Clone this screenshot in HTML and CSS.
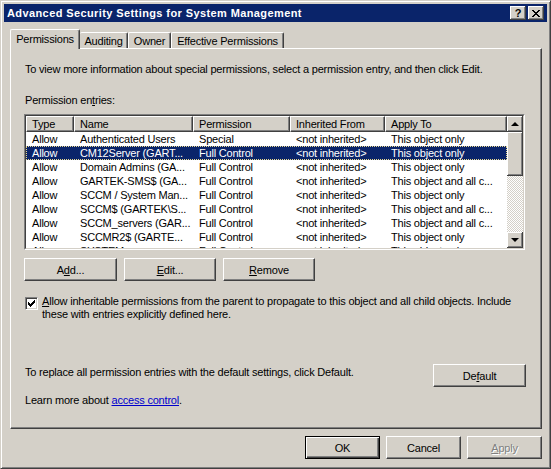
FILE: index.html
```html
<!DOCTYPE html>
<html lang="en">
<head>
  <meta charset="UTF-8">
  <title>Advanced Security Settings for System Management</title>
  <link rel="stylesheet" href="styles.css">
</head>
<body>
  <div class="window">
    <div class="titlebar">
      <span class="title">Advanced Security Settings for System Management</span>
      <div class="caption-btns">
        <span class="cap-btn help">?</span>
        <span class="cap-btn close">
          <svg width="8" height="7" viewBox="0 0 8 7"><path d="M0 0h2v1H0zM1 1h2v1H1zM2 2h4v1H2zM3 3h2v1H3zM2 4h4v1H2zM1 5h2v1H1zM0 6h2v1H0zM6 0h2v1H6zM5 1h2v1H5zM5 5h2v1H5zM6 6h2v1H6z" fill="#000"/></svg>
        </span>
      </div>
    </div>

    <div class="dialog-body">
      <div class="tabs">
        <div class="tab active tab-perm">Permissions</div>
        <div class="tab tab-audit">Auditing</div>
        <div class="tab tab-owner">Owner</div>
        <div class="tab tab-eff">Effective Permissions</div>
      </div>

      <div class="panel">
        <p class="intro">To view more information about special permissions, select a permission entry, and then click Edit.</p>
        <p class="list-label">Permission en<u>t</u>ries:</p>

        <div class="listbox">
          <div class="listbox-inner">
            <div class="rows">
              <div class="row head">
                <div>Type</div><div>Name</div><div>Permission</div><div>Inherited From</div><div>Apply To</div>
              </div>
              <div class="row"><div>Allow</div><div>Authenticated Users</div><div>Special</div><div>&lt;not inherited&gt;</div><div>This object only</div></div>
              <div class="row selected"><div>Allow</div><div>CM12Server (GART...</div><div>Full Control</div><div>&lt;not inherited&gt;</div><div>This object only</div></div>
              <div class="row"><div>Allow</div><div>Domain Admins (GA...</div><div>Full Control</div><div>&lt;not inherited&gt;</div><div>This object only</div></div>
              <div class="row"><div>Allow</div><div>GARTEK-SMS$ (GA...</div><div>Full Control</div><div>&lt;not inherited&gt;</div><div>This object and all c...</div></div>
              <div class="row"><div>Allow</div><div>SCCM / System Man...</div><div>Full Control</div><div>&lt;not inherited&gt;</div><div>This object only</div></div>
              <div class="row"><div>Allow</div><div>SCCM$ (GARTEK\S...</div><div>Full Control</div><div>&lt;not inherited&gt;</div><div>This object and all c...</div></div>
              <div class="row"><div>Allow</div><div>SCCM_servers (GAR...</div><div>Full Control</div><div>&lt;not inherited&gt;</div><div>This object and all c...</div></div>
              <div class="row"><div>Allow</div><div>SCCMR2$ (GARTE...</div><div>Full Control</div><div>&lt;not inherited&gt;</div><div>This object only</div></div>
              <div class="row"><div>Allow</div><div>SYSTEM</div><div>Full Control</div><div>&lt;not inherited&gt;</div><div>This object only</div></div>
            </div>
            <div class="scrollbar">
              <div class="sb-btn"><span class="arrow up"></span></div>
              <div class="sb-thumb"></div>
              <div class="sb-track"></div>
              <div class="sb-btn"><span class="arrow down"></span></div>
            </div>
          </div>
        </div>

        <div class="list-buttons">
          <button class="btn">A<u>d</u>d...</button>
          <button class="btn"><u>E</u>dit...</button>
          <button class="btn"><u>R</u>emove</button>
        </div>

        <div class="inherit">
          <span class="checkbox">
            <svg width="7" height="7" viewBox="0 0 7 7"><path d="M6 0h1v1H6zM5 1h2v1H5zM0 2h1v1H0zM4 2h3v1H4zM0 3h2v1H0zM3 3h3v1H3zM0 4h5v1H0zM1 5h3v1H1zM2 6h1v1H2z" fill="#000"/></svg>
          </span>
          <span class="inherit-text"><u>A</u>llow inheritable permissions from the parent to propagate to this object and all child objects. Include<br>these with entries explicitly defined here.</span>
        </div>

        <div class="default-row">
          <span class="default-text">To replace all permission entries with the default settings, click Default.</span>
          <button class="btn btn-default">De<u>f</u>ault</button>
        </div>

        <p class="learn">Learn more about <a href="#">access control</a>.</p>
      </div>

      <div class="footer">
        <button class="btn btn-ok">OK</button>
        <button class="btn">Cancel</button>
        <button class="btn" disabled><u>A</u>pply</button>
      </div>
    </div>
  </div>
</body>
</html>
```

FILE: styles.css
```css
/* Classic dialog look */
body {
  margin: 0;
  font-family: 'Liberation Sans', Arial, sans-serif;
  font-size: 11px;
  letter-spacing: -0.2px;
  color: #000;
  background-color: #d4d0c8;
}
p {
  margin: 0;
}
.window {
  width: 551px;
  height: 469px;
  box-sizing: border-box;
  background-color: #d4d0c8;
  border: 1px solid;
  border-color: #d4d0c8 #404040 #404040 #d4d0c8;
  box-shadow: inset 1px 1px #fff, inset -1px -1px #808080;
  padding: 3px;
  display: flex;
  flex-direction: column;
}

/* Title bar */
.titlebar {
  height: 18px;
  background-color: #0a246a;
  display: flex;
  align-items: center;
  justify-content: space-between;
  padding: 0 3px 0 3px;
}
.title {
  color: #fff;
  font-weight: bold;
  font-size: 11px;
  letter-spacing: 0.4px;
}
.caption-btns {
  display: flex;
  gap: 2px;
}
.cap-btn {
  width: 16px;
  height: 14px;
  box-sizing: border-box;
  background-color: #d4d0c8;
  box-shadow: inset -1px -1px #404040, inset 1px 1px #fff, inset -2px -2px #808080;
  display: flex;
  align-items: center;
  justify-content: center;
  font-weight: bold;
  font-size: 11px;
  line-height: 14px;
}

/* Tabs */
.dialog-body {
  padding: 7px 5px 0 6px;
}
.tabs {
  display: flex;
  align-items: flex-end;
  height: 20px;
  margin-bottom: -1px;
  position: relative;
  z-index: 1;
}
.tab {
  height: 16px;
  margin-bottom: 1px;
  box-sizing: border-box;
  padding-top: 2px;
  text-align: center;
  background-color: #d4d0c8;
  border-top: 1px solid #fff;
  border-left: 1px solid #fff;
  border-right: 1px solid #404040;
  box-shadow: inset -1px 0 #808080;
  border-radius: 2px 2px 0 0;
}
.tab.active {
  height: 20px;
  margin-bottom: 0;
  padding-top: 3px;
}
.tab-perm { width: 70px; }
.tab-audit { width: 48px; border-left: none; }
.tab-owner { width: 43px; }
.tab-eff { width: 113px; }

.panel {
  height: 381px;
  box-sizing: border-box;
  border: 1px solid;
  border-color: #fff #404040 #404040 #fff;
  box-shadow: inset -1px -1px #808080;
  padding: 0 15px 0 14px;
}
.intro {
  margin-top: 14px;
  line-height: 13px;
}
.list-label {
  margin-top: 18px;
  line-height: 13px;
}

/* List view */
.listbox {
  margin: 7px 0 0 -1px;
  width: 501px;
  height: 136px;
  box-sizing: border-box;
  border: 1px solid;
  border-color: #808080 #fff #fff #808080;
}
.listbox-inner {
  height: 100%;
  box-sizing: border-box;
  border: 1px solid;
  border-color: #404040 #d4d0c8 #d4d0c8 #404040;
  background-color: #fff;
  display: flex;
}
.rows {
  flex: 1;
  overflow: hidden;
}
.row {
  display: grid;
  grid-template-columns: 48px 119px 97px 95px 122px;
  height: 14px;
  line-height: 14px;
}
.row div {
  padding-left: 6px;
  white-space: nowrap;
  overflow: hidden;
}
.row.head {
  height: 16px;
  line-height: 15px;
}
.row.head div {
  background-color: #d4d0c8;
  box-sizing: border-box;
  border-top: 1px solid #fff;
  border-left: 1px solid #fff;
  border-right: 1px solid #404040;
  border-bottom: 1px solid #404040;
  box-shadow: inset -1px -1px #808080;
  padding-left: 5px;
}
.row.selected {
  background-color: #0a246a;
  color: #fff;
  outline: 1px dotted #e8d890;
  outline-offset: -1px;
}

.scrollbar {
  width: 16px;
  display: flex;
  flex-direction: column;
}
.sb-btn,
.sb-thumb {
  background-color: #d4d0c8;
  box-shadow: inset -1px -1px #404040, inset 1px 1px #fff, inset -2px -2px #808080;
}
.sb-btn {
  height: 16px;
  display: flex;
  align-items: center;
  justify-content: center;
}
.sb-thumb {
  height: 44px;
}
.sb-track {
  flex: 1;
  background: repeating-conic-gradient(#d4d0c8 0 25%, #fff 0 50%) 0 0 / 2px 2px;
}
.arrow {
  width: 0;
  height: 0;
  border-left: 4px solid transparent;
  border-right: 4px solid transparent;
}
.arrow.up {
  border-bottom: 4px solid #000;
}
.arrow.down {
  border-top: 4px solid #000;
}

/* Buttons */
.btn {
  font-family: inherit;
  font-size: 11px;
  letter-spacing: inherit;
  color: #000;
  height: 23px;
  padding: 0;
  background-color: #d4d0c8;
  border: 1px solid;
  border-color: #fff #404040 #404040 #fff;
  box-shadow: inset -1px -1px #808080;
}
.btn:disabled {
  color: #808080;
  text-shadow: 1px 1px #fff;
}
.btn-ok {
  border: 1px solid #000;
  box-shadow: inset 1px 1px #fff, inset -1px -1px #404040, inset -2px -2px #808080;
}
.list-buttons {
  margin: 8px 0 0 -1px;
  display: flex;
  gap: 7px;
}
.list-buttons .btn {
  width: 92px;
}
.list-buttons .btn:first-child {
  width: 93px;
}

/* Inherit checkbox */
.inherit {
  margin-top: 14px;
  display: flex;
  gap: 4px;
  line-height: 13px;
}
.checkbox {
  flex: none;
  width: 13px;
  height: 13px;
  margin-top: 2px;
  box-sizing: border-box;
  border: 1px solid;
  border-color: #808080 #fff #fff #808080;
  box-shadow: inset 1px 1px #404040, inset -1px -1px #d4d0c8;
  background-color: #fff;
  display: flex;
  align-items: center;
  justify-content: center;
}

.default-row {
  margin-top: 43px;
  display: flex;
  align-items: flex-start;
  justify-content: space-between;
}
.default-text {
  padding-top: 2px;
  line-height: 13px;
}
.btn-default {
  width: 93px;
}
.learn {
  margin-top: 7px;
  line-height: 13px;
}
.learn a {
  color: #0000cc;
}

.footer {
  margin-top: 7px;
  display: flex;
  justify-content: flex-end;
  gap: 6px;
}
.footer .btn {
  width: 75px;
}
```
